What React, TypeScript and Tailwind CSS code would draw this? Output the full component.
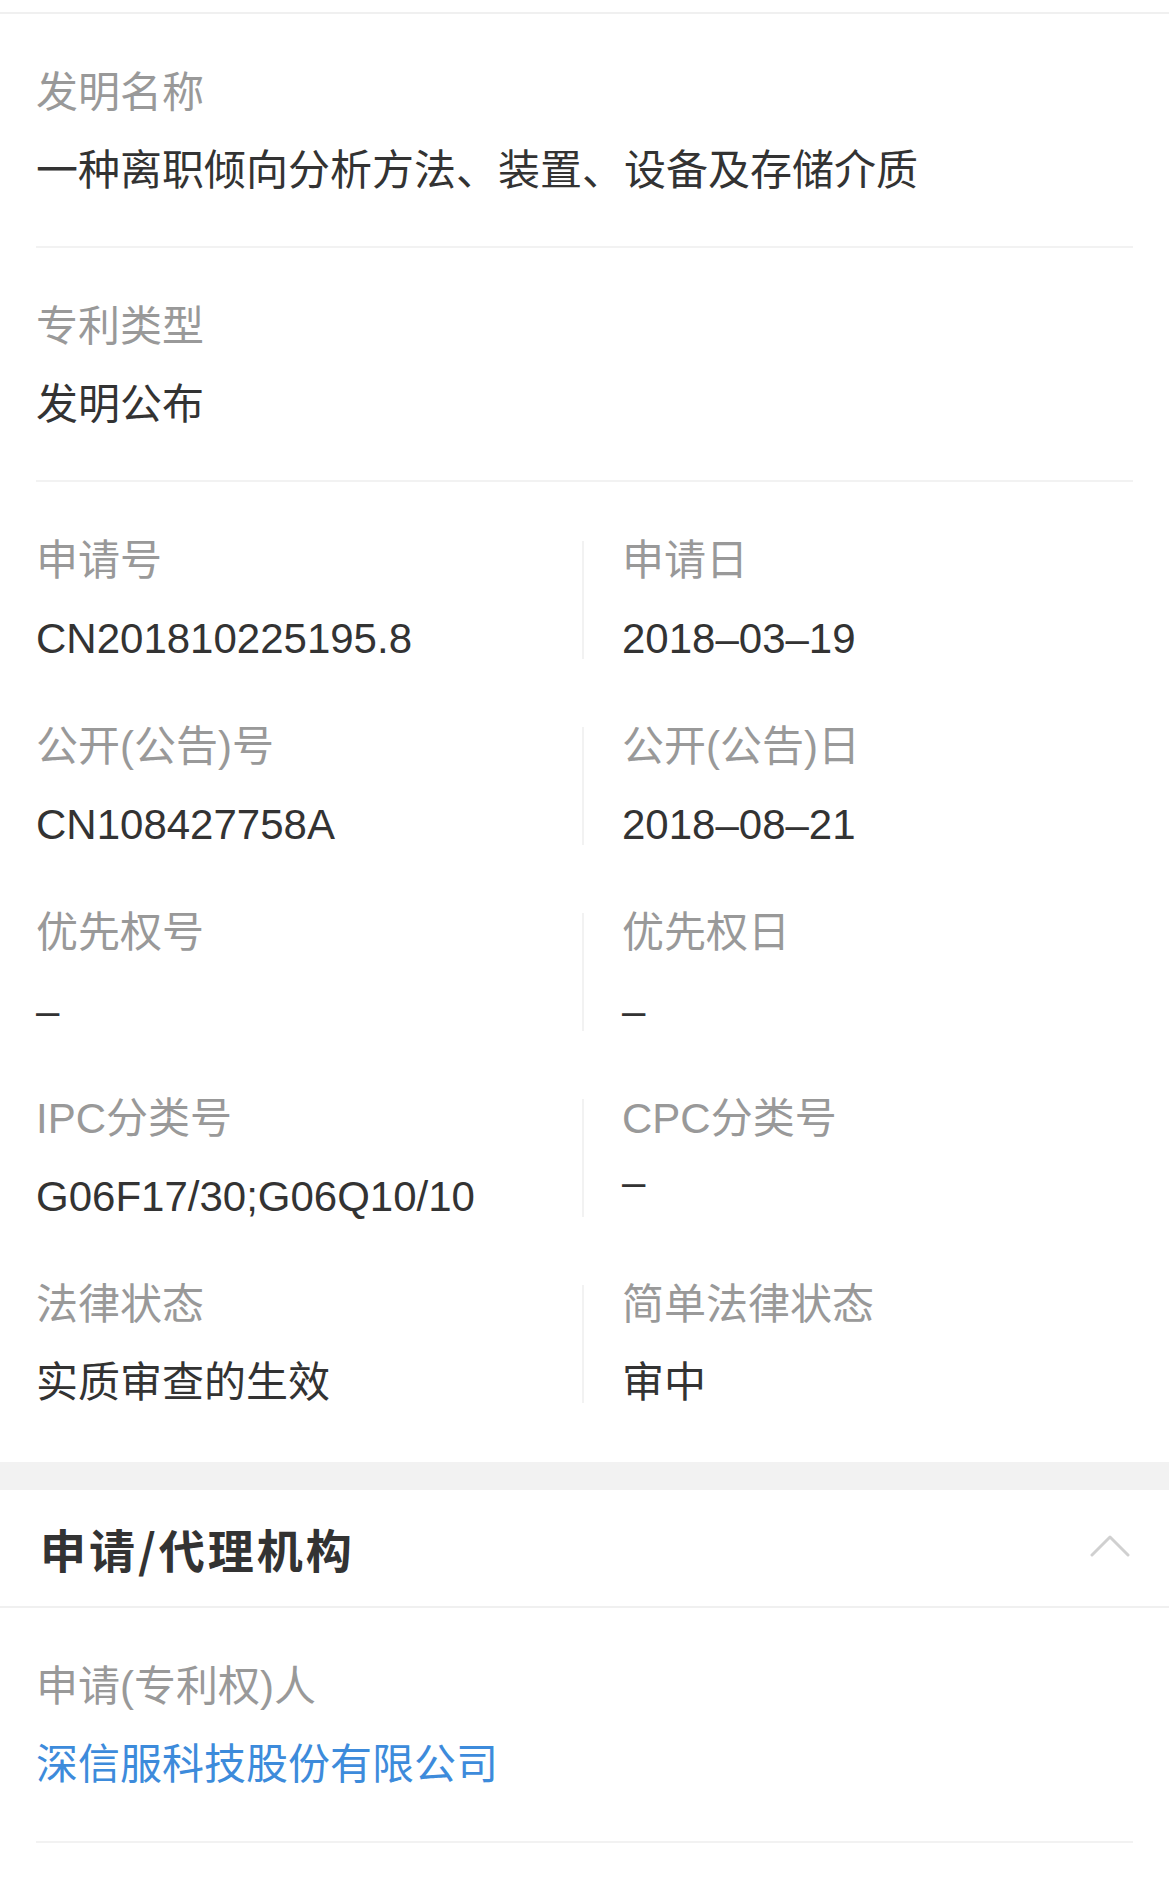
const font = "font-['Liberation_Sans','Noto_Sans_CJK_SC',sans-serif]"

function Label({ children }: { children: React.ReactNode }) {
  return <div className="h-[50px] leading-[50px] text-[42px] text-[#999999] whitespace-nowrap">{children}</div>
}

function Value({ children, className = '' }: { children: React.ReactNode; className?: string }) {
  return (
    <div className={`mt-[28px] h-[50px] leading-[50px] text-[42px] text-[#333333] whitespace-nowrap ${className}`}>
      {children}
    </div>
  )
}

// 单字段块：标签在上，值在下，底部细分隔线
function Block({ label, value }: { label: string; value: string }) {
  return (
    <div className="mx-[36px] pt-[54px] pb-[50px] border-b-2 border-[#f2f2f2]">
      <Label>{label}</Label>
      <Value>{value}</Value>
    </div>
  )
}

type Pair = { l: [string, string]; r: [string, string]; rTight?: boolean }

const pairs: Pair[] = [
  { l: ['申请号', 'CN201810225195.8'], r: ['申请日', '2018–03–19'] },
  { l: ['公开(公告)号', 'CN108427758A'], r: ['公开(公告)日', '2018–08–21'] },
  { l: ['优先权号', '–'], r: ['优先权日', '–'] },
  { l: ['IPC分类号', 'G06F17/30;G06Q10/10'], r: ['CPC分类号', '–'], rTight: true },
  { l: ['法律状态', '实质审查的生效'], r: ['简单法律状态', '审中'] },
]

export default function App() {
  return (
    <div className={`w-[1169px] min-h-[1882px] bg-white ${font}`}>
      <div className="h-[12px]" />
      <div className="h-[2px] bg-[#f0f0f0]" />

      <Block label="发明名称" value="一种离职倾向分析方法、装置、设备及存储介质" />
      <Block label="专利类型" value="发明公布" />

      <div className="mx-[36px] pt-[54px] pb-[54px] flex flex-col gap-[58px]">
        {pairs.map((p) => (
          <div key={p.l[0]} className="flex">
            <div className="w-[546px]">
              <Label>{p.l[0]}</Label>
              <Value>{p.l[1]}</Value>
            </div>
            <div className="w-[2px] my-[5px] bg-[#f2f2f2]" />
            <div className="pl-[38px]">
              <Label>{p.r[0]}</Label>
              <Value className={p.rTight ? '!mt-[13px]' : ''}>{p.r[1]}</Value>
            </div>
          </div>
        ))}
      </div>

      <div className="h-[28px] bg-[#f2f2f2]" />

      <div className="h-[118px] flex items-center justify-between pl-[40px] pr-[39px] border-b-2 border-[#f0f0f0]">
        <div className="text-[46px] font-bold text-[#333333] font-['Noto_Sans_CJK_SC',sans-serif] tracking-[3px]">
          申请/代理机构
        </div>
        <svg width="40" height="24" viewBox="0 0 40 24" fill="none" className="mt-[-4px]">
          <polyline points="2,21 20,3 38,21" stroke="#d0d0d0" strokeWidth="3" strokeLinecap="round" strokeLinejoin="round" />
        </svg>
      </div>

      <div className="mx-[36px] pt-[54px] pb-[51px] border-b-2 border-[#f2f2f2]">
        <Label>申请(专利权)人</Label>
        <Value className="!text-[#3d8bdb]">深信服科技股份有限公司</Value>
      </div>
    </div>
  )
}
